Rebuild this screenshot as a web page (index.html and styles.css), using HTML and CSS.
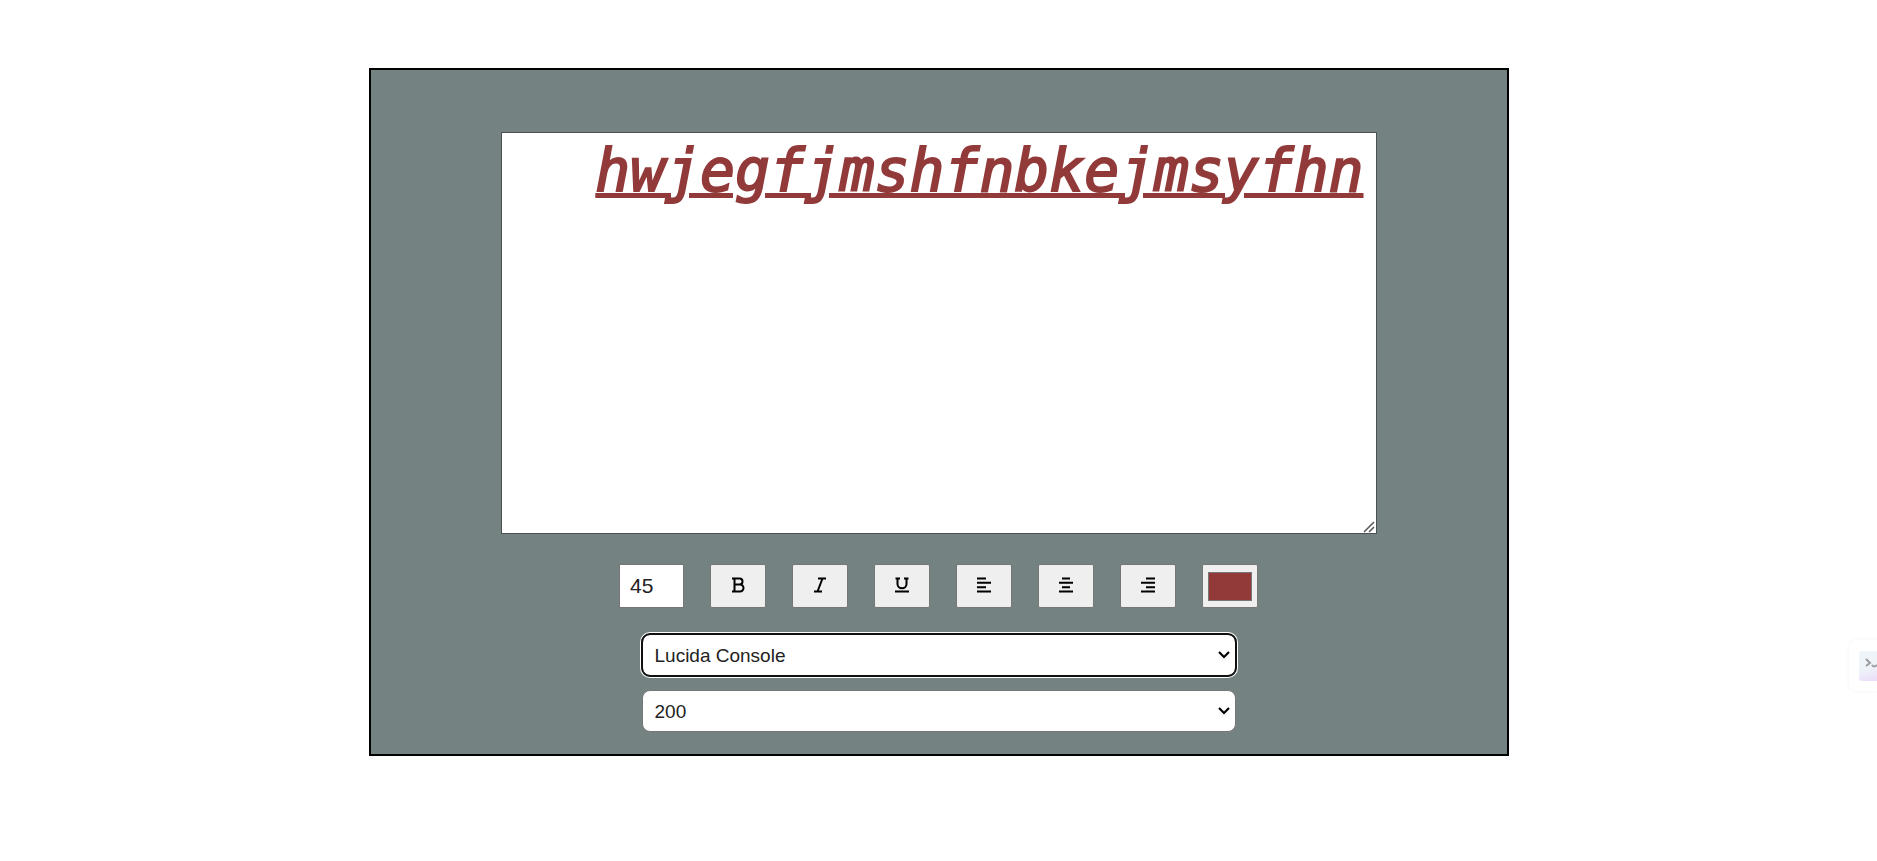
FILE: index.html
```html
<!DOCTYPE html>
<html lang="en">
<head>
<meta charset="utf-8">
<title>Text editor</title>
<link rel="stylesheet" href="styles.css">
</head>
<body>
<main class="editor">
  <textarea class="editor-text" aria-label="Text" spellcheck="false">hwjegfjmshfnbkejmsyfhn</textarea>
  <div class="toolbar">
    <input class="tool size" type="text" inputmode="numeric" value="45" aria-label="Font size">
    <button class="tool" type="button" aria-label="Bold"><svg class="icon" viewBox="0 0 16 16"><path d="M2 1.500H9.500A3 3 0 0 1 9.500 7.500H4.500M9.500 7.500H10A3.500 3.500 0 0 1 10 14.500H2M4.500 1.500V14.500"/></svg></button>
    <button class="tool" type="button" aria-label="Italic"><svg class="icon" viewBox="0 0 16 16"><path d="M6 1.500H14M2 14.500H10M10.500 1.500L5.500 14.500"/></svg></button>
    <button class="tool" type="button" aria-label="Underline"><svg class="icon" viewBox="0 0 16 16"><path d="M1.500 1.500H6M10 1.500H14.500M3.500 1.500V7A4.500 4.200 0 0 0 12.500 7V1.500M1 14.500H15"/></svg></button>
    <button class="tool" type="button" aria-label="Align left"><svg class="icon" viewBox="0 0 16 16"><path d="M1 1.500H10M1 5.800H15M1 10.200H10M1 14.500H15"/></svg></button>
    <button class="tool" type="button" aria-label="Align center"><svg class="icon" viewBox="0 0 16 16"><path d="M4 1.500H12M1 5.800H15M4 10.200H12M1 14.500H15"/></svg></button>
    <button class="tool" type="button" aria-label="Align right"><svg class="icon" viewBox="0 0 16 16"><path d="M6 1.500H15M1 5.800H15M6 10.200H15M1 14.500H15"/></svg></button>
    <input class="tool color" type="color" value="#923a3a" aria-label="Text color">
  </div>
  <div class="choices">
    <select class="choice choice-active" aria-label="Font family"><option>Lucida Console</option></select>
    <select class="choice" aria-label="Font weight"><option>200</option></select>
  </div>
</main>
<button class="side-tab" type="button" aria-label="Open console"><span class="side-tile"><svg class="side-icon" viewBox="0 0 18 30"><path d="M7 8L11 12L7 15M13 14Q15 17 18 14"/></svg></span></button>
</body>
</html>
```
FILE: styles.css
```css
* { box-sizing: border-box; }
body {
  margin: 0;
  background: #fff;
  font-family: "Liberation Sans", Arial, sans-serif;
  overflow-x: hidden;
}
.editor {
  width: 61%;
  max-width: 1140px;
  margin: 68px auto 0;
  padding: 62px 24px 22px;
  border: 2px solid #000;
  background: #748381;
  display: flex;
  flex-direction: column;
  align-items: center;
}
.editor-text {
  width: 876px;
  max-width: 100%;
  height: 402px;
  padding: 4px 12px;
  border: 1px solid #4a5150;
  background: #fff;
  color: #923a3a;
  font: italic 400 58px/68px "DejaVu Sans Mono", monospace;
  -webkit-text-stroke: 2px #923a3a;
  text-align: right;
  text-decoration: underline;
  text-decoration-thickness: 5px;
  text-underline-offset: 2px;
  resize: both;
}
.editor-text::-webkit-scrollbar { width: 15px; height: 15px; }
.editor-text::-webkit-resizer {
  background: url("data:image/svg+xml,%3Csvg xmlns='http://www.w3.org/2000/svg' viewBox='0 0 15 15'%3E%3Cpath d='M3 14L13 4M8 14L13 9' fill='none' stroke='%23555' stroke-width='1.500'/%3E%3C/svg%3E") no-repeat;
}
.toolbar {
  margin-top: 30px;
  display: flex;
  gap: 26px;
}
.tool {
  width: 56px;
  height: 44px;
  padding: 0;
  border: 1px solid #767676;
  border-radius: 2px;
  background: #efefef;
}
.size {
  width: 65px;
  padding: 0 10px;
  border-radius: 0;
  background: #fff;
  color: #222;
  font: 21px "Liberation Sans", Arial, sans-serif;
  text-align: left;
}
.icon {
  display: block;
  width: 16px;
  height: 16px;
  margin: 0 auto 3px;
  fill: none;
  stroke: #000;
  stroke-width: 2;
}
.color { appearance: none; padding: 7px 5px 6px; }
.color::-webkit-color-swatch-wrapper { padding: 0; }
.color::-webkit-color-swatch { border: 1px solid #777; border-radius: 0; }
.choices {
  width: 594px;
  max-width: 100%;
  margin-top: 26px;
  display: grid;
  gap: 14px;
}
.choice {
  appearance: none;
  height: 42px;
  padding: 0 30px 0 12px;
  border: 1px solid #767676;
  border-radius: 8px;
  color: #222;
  font: 19px "Liberation Sans", Arial, sans-serif;
  background: #fff url("data:image/svg+xml,%3Csvg xmlns='http://www.w3.org/2000/svg' viewBox='0 0 12 8'%3E%3Cpath d='M1 1l5 5l5-5' fill='none' stroke='black' stroke-width='2.200'/%3E%3C/svg%3E") no-repeat right 5px center / 12px 8px;
}
.choice-active {
  outline: 2px solid #101010;
  outline-offset: -1px;
  box-shadow: 0 0 0 2px #fff;
}
.side-tab {
  position: fixed;
  top: 640px;
  right: 0;
  width: 28px;
  height: 51px;
  padding: 0 0 0 10px;
  border: 0;
  border-radius: 8px 0 0 8px;
  background: #fff;
  box-shadow: 0 0 5px #0000000d;
  display: flex;
  align-items: center;
}
.side-tile {
  width: 100%;
  height: 30px;
  border-radius: 3px 0 0 3px;
  background: linear-gradient(165deg, #eff4f9 55%, #eadcf8);
}
.side-icon {
  display: block;
  width: 18px;
  height: 30px;
  fill: none;
  stroke: #9a9da1;
  stroke-width: 2;
}
```
